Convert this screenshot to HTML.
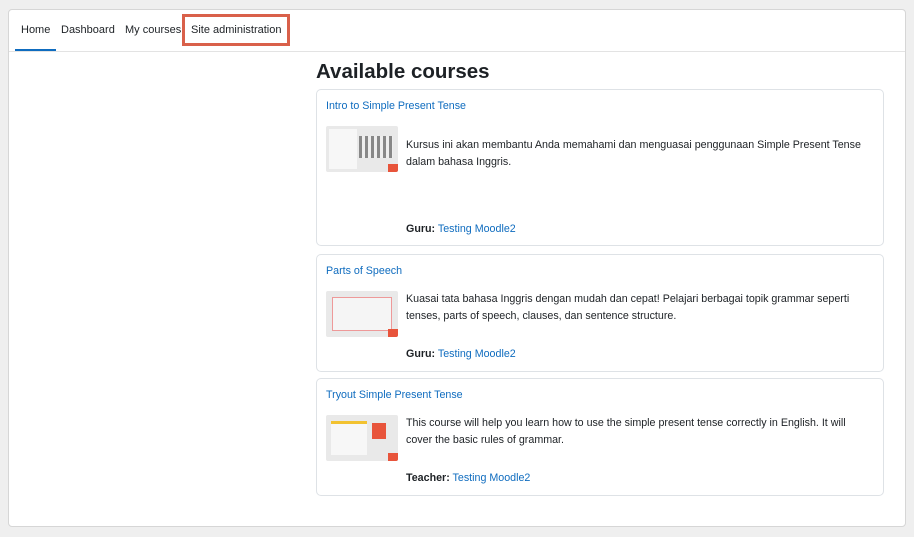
<!DOCTYPE html>
<html><head><meta charset="utf-8"><style>
*{box-sizing:border-box;margin:0;padding:0}
body{width:914px;height:537px;background:#efefef;font-family:"Liberation Sans",sans-serif;position:relative;overflow:hidden;color:#1d2125}
.panel{position:absolute;left:8px;top:9px;width:898px;height:518px;background:#fff;border:1px solid #d6d6d6;border-radius:4px}
.nav{position:absolute;left:0;top:0;width:896px;height:42px;border-bottom:1px solid #e3e3e3}
.nav span{position:absolute;top:14px;font-size:11px;color:#1d2125}
.ul{position:absolute;left:6px;top:39px;width:41px;height:2px;background:#0f6cbf}
.hl{position:absolute;left:173px;top:4px;width:108px;height:32px;border:3px solid #d9604a}
h2{position:absolute;left:307px;top:50px;font-size:20.5px;font-weight:bold}
.card{position:absolute;left:307px;width:568px;border:1px solid #dee2e6;border-radius:5px}
.t{position:absolute;left:9px;top:10px;font-size:10.7px;color:#0f6cbf}
.img{position:absolute;left:9px;width:72px;height:46px;background:#e9e9e9;border-radius:2px;overflow:hidden}
.img i{position:absolute;display:block}
.d{position:absolute;left:89px;font-size:10.7px;line-height:17px;color:#1d2125;width:460px}
.g{position:absolute;left:89px;font-size:10.7px}
.g b{font-weight:bold}.g a{color:#0f6cbf;text-decoration:none}
</style></head><body>
<div class="panel">
 <div class="nav">
  <span style="left:12px">Home</span>
  <span style="left:52px">Dashboard</span>
  <span style="left:116px">My courses</span>
  <span style="left:182px">Site administration</span>
  <div class="ul"></div>
  <div class="hl"></div>
 </div>
 <h2>Available courses</h2>
 <div class="card" style="top:79px;height:157px">
  <div class="t" style="top:10px">Intro to Simple Present Tense</div>
  <div class="img" style="top:36px"><i style="left:3px;top:3px;width:28px;height:40px;background:#f7f7f7"></i><i style="left:33px;top:10px;width:34px;height:22px;background:repeating-linear-gradient(90deg,#888 0 3px,#eee 3px 6px)"></i><i style="right:0;bottom:0;width:10px;height:8px;background:#e8543b"></i></div>
  <div class="d" style="top:47px">Kursus ini akan membantu Anda memahami dan menguasai penggunaan Simple Present Tense dalam bahasa Inggris.</div>
  <div class="g" style="top:133px"><b>Guru:</b> <a>Testing Moodle2</a></div>
 </div>
 <div class="card" style="top:244px;height:118px">
  <div class="t">Parts of Speech</div>
  <div class="img" style="top:36px"><i style="left:6px;top:6px;width:60px;height:34px;background:#f5f5f5;border:1px solid #e99"></i><i style="right:0;bottom:0;width:10px;height:8px;background:#e8543b"></i></div>
  <div class="d" style="top:36px">Kuasai tata bahasa Inggris dengan mudah dan cepat! Pelajari berbagai topik grammar seperti tenses, parts of speech, clauses, dan sentence structure.</div>
  <div class="g" style="top:93px"><b>Guru:</b> <a>Testing Moodle2</a></div>
 </div>
 <div class="card" style="top:368px;height:118px">
  <div class="t">Tryout Simple Present Tense</div>
  <div class="img" style="top:36px"><i style="left:5px;top:6px;width:36px;height:34px;background:#f7f7f7;border-top:3px solid #f2c230"></i><i style="left:46px;top:8px;width:14px;height:16px;background:#e8543b"></i><i style="right:0;bottom:0;width:10px;height:8px;background:#e8543b"></i></div>
  <div class="d" style="top:36px">This course will help you learn how to use the simple present tense correctly in English. It will cover the basic rules of grammar.</div>
  <div class="g" style="top:93px"><b>Teacher:</b> <a>Testing Moodle2</a></div>
 </div>
</div>
</body></html>
